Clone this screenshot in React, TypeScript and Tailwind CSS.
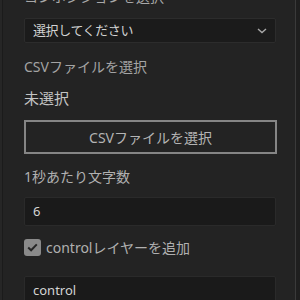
import React from "react";

export default function App() {
  const font = { fontFamily: '"Noto Sans", "Noto Sans CJK JP", sans-serif' };
  return (
    <div className="w-[300px] h-[300px] overflow-hidden bg-[#1f1f1f] flex" style={font}>
      <div className="w-[2px] bg-[#262626]" />
      <div className="w-[294px] h-full bg-[#232323] border-l border-[#1b1b1b] border-r border-r-[#3a3a3a] pl-[21px] flex flex-col">
        <div className="mt-[-13px] h-[20px] leading-[20px] text-[14px] text-[#a8a8a8] whitespace-nowrap">
          コンポジションを選択
        </div>
        <div className="mt-[11px] w-[252px] h-[25px] shrink-0 bg-[#1b1b1b] border border-[#2c2c2c] rounded-[2px] flex items-center justify-between pl-[8px] pr-[8px]">
          <span className="text-[13px] tracking-[-0.4px] text-[#d2d2d2] leading-none">選択してください</span>
          <svg width="10" height="6" viewBox="0 0 10 6">
            <path d="M1 1 L5 4.5 L9 1" fill="none" stroke="#a8a8a8" strokeWidth="1.4" />
          </svg>
        </div>
        <div className="mt-[14px] h-[20px] leading-[20px] text-[14px] text-[#a4a4a4] whitespace-nowrap">
          CSVファイルを選択
        </div>
        <div className="mt-[10px] h-[22px] leading-[22px] text-[15px] text-[#c4c4c4]">未選択</div>
        <div className="mt-[11px] w-[253px] h-[34px] shrink-0 border-2 border-[#858585] flex items-center justify-center text-[14px] text-[#b4b4b4]">
          CSVファイルを選択
        </div>
        <div className="mt-[13px] h-[20px] leading-[20px] text-[14px] text-[#b0b0b0] whitespace-nowrap">
          1秒あたり文字数
        </div>
        <div className="mt-[10px] w-[252px] h-[29px] shrink-0 bg-[#1a1a1a] border border-[#2a2a2a] rounded-[2px] flex items-center pl-[8px] text-[13px] text-[#d4d4d4]">
          6
        </div>
        <div className="mt-[13px] h-[18px] flex items-center gap-[5px]">
          <div className="w-[17px] h-[17px] rounded-[3px] bg-[#8a8a8a] flex items-center justify-center">
            <svg width="11" height="9" viewBox="0 0 11 9">
              <path d="M1.2 4.6 L4.1 7.3 L9.8 1.4" fill="none" stroke="#262626" strokeWidth="2" />
            </svg>
          </div>
          <span className="text-[14px] text-[#b0b0b0] whitespace-nowrap leading-none">controlレイヤーを追加</span>
        </div>
        <div className="mt-[20px] w-[252px] h-[30px] shrink-0 bg-[#1a1a1a] border border-[#2a2a2a] rounded-[2px] flex items-center pl-[8px] text-[13px] text-[#d4d4d4]">
          control
        </div>
      </div>
    </div>
  );
}
